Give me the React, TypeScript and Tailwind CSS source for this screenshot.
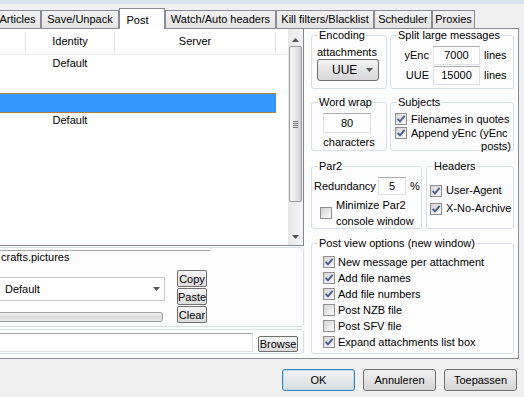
import React from 'react';

function Check({ on }: { on?: boolean }) {
  return (
    <span className="w-[12px] h-[12px] shrink-0 border border-[#8f8f8f] bg-linear-to-br from-[#d4d4d4] to-[#fbfbfb] flex items-center justify-center">
      {on && (
        <svg width="10" height="10" viewBox="0 0 10 10">
          <path d="M1.6 4.8 L4 7.4 L8.6 1.8" fill="none" stroke="#4a5d8f" strokeWidth="1.9" />
        </svg>
      )}
    </span>
  );
}

function CheckRow({ on, label, className }: { on?: boolean; label: string; className: string }) {
  return (
    <div className={className}>
      <Check on={on} />
      <span className="whitespace-nowrap">{label}</span>
    </div>
  );
}

function Group({ title, className, children }: { title: string; className: string; children?: React.ReactNode }) {
  return (
    <fieldset className={className}>
      <legend className="ml-[6px] px-[1px] leading-[12px] whitespace-nowrap">{title}</legend>
      {children}
    </fieldset>
  );
}

function Tab({ label, className }: { label: string; className: string }) {
  return <div className={className}>{label}</div>;
}

function Arrow({ up }: { up?: boolean }) {
  return (
    <svg width="7" height="4" viewBox="0 0 7 4">
      <path d={up ? 'M0 4 L3.5 0 L7 4 Z' : 'M0 0 L7 0 L3.5 4 Z'} fill="#555" />
    </svg>
  );
}

const tab =
  'h-[18px] shrink-0 border border-b-0 border-[#898c95] bg-linear-to-b from-[#f3f3f3] to-[#e3e3e3] flex items-center justify-center whitespace-nowrap';
const groupBox = 'border border-[#d5dfe5] rounded-[3px] min-w-0';
const edit = 'bg-white border border-[#dde1e7] border-t-[#abadb3] flex items-center justify-center';
const smallBtn =
  'border border-[#707070] rounded-[2px] bg-linear-to-b from-[#f4f4f4] to-[#dcdcdc] flex items-center justify-center leading-[12px]';
const dlgBtn =
  'w-[73px] h-[22px] border border-[#707070] rounded-[3px] bg-linear-to-b from-[#f2f2f2] to-[#d4d4d4] flex items-center justify-center';

export default function App() {
  return (
    <div className="w-[524px] h-[397px] overflow-hidden bg-[#f0f0f0] text-[11px] text-black font-['Liberation_Sans',Arial,sans-serif] flex flex-col">
      <div className="h-[4px] shrink-0 bg-[#d9e3ef]" />

      {/* tabs */}
      <div className="h-[24px] shrink-0 flex items-end ml-[-6px]">
        <Tab label="Articles" className={`${tab} w-[47px]`} />
        <Tab label="Save/Unpack" className={`${tab} w-[78px]`} />
        <div className="w-[46px] h-[21px] -mb-[1px] shrink-0 relative z-10 bg-[#fdfdfd] border border-b-0 border-[#898c95] flex justify-center pt-[3px] pr-[9px]">
          Post
        </div>
        <Tab label="Watch/Auto headers" className={`${tab} w-[111px]`} />
        <Tab label="Kill filters/Blacklist" className={`${tab} w-[98px]`} />
        <Tab label="Scheduler" className={`${tab} w-[58px]`} />
        <Tab label="Proxies" className={`${tab} w-[43px]`} />
      </div>

      {/* tab panel */}
      <div className="ml-[-10px] w-[529px] h-[331px] shrink-0 border border-[#898c95] bg-[#fdfdfd] flex">
        {/* left column */}
        <div className="w-[313px] shrink-0 flex flex-col">
          {/* list */}
          <div className="h-[217px] shrink-0 border-r border-b border-[#828790] bg-white flex">
            <div className="flex-1 flex flex-col">
              <div className="h-[26px] flex border-b border-[#eaeaea]">
                <div className="w-[35px] border-r border-[#e3e3e3] mt-[3px]" />
                <div className="w-[89px] border-r border-[#e3e3e3] mt-[3px] flex items-center justify-center pb-[3px]">Identity</div>
                <div className="w-[161px] border-r border-[#e3e3e3] mt-[3px] flex items-center justify-center pb-[3px]">Server</div>
              </div>
              <div className="h-[16px] flex items-center">
                <div className="w-[35px]" />
                <div className="w-[89px] text-center pr-[1px] leading-[13px]">Default</div>
              </div>
              <div className="h-[22px]" />
              <div className="h-[20px] w-[285px] bg-[#3399ff] border-y border-[#b07c42]" />
              <div className="h-[15px] flex items-center">
                <div className="w-[35px]" />
                <div className="w-[89px] text-center pr-[1px] leading-[13px]">Default</div>
              </div>
            </div>
            {/* scrollbar */}
            <div className="w-[15px] shrink-0 flex flex-col bg-linear-to-r from-[#e8e8e8] to-[#f5f5f5]">
              <div className="h-[17px] flex items-center justify-center pt-[5px]">
                <Arrow up />
              </div>
              <div className="h-[156px] mx-[1px] border border-[#9a9a9a] rounded-[2px] bg-linear-to-r from-[#f6f6f6] via-[#e8e8e8] to-[#cfcfcf] flex flex-col items-center justify-center gap-[1px]">
                <div className="w-[5px] h-[1px] bg-[#777]" />
                <div className="w-[5px] h-[1px] bg-[#777]" />
                <div className="w-[5px] h-[1px] bg-[#777]" />
                <div className="w-[5px] h-[1px] bg-[#777]" />
              </div>
              <div className="flex-1" />
              <div className="h-[17px] flex items-center justify-center">
                <Arrow />
              </div>
            </div>
          </div>

          {/* newsgroup / identity group */}
          <div className={`${groupBox} mt-[1px] h-[80px] shrink-0 flex flex-col`}>
            <div className="mt-[2px] w-[218px] h-[17px] border-t border-[#a5a5a5] pl-[9px] leading-[13px]">crafts.pictures</div>
            <div className="flex">
              <div className="w-[173px] shrink-0 flex flex-col">
                <div className="mt-[10px] h-[24px] bg-white border border-[#c6c9ce] flex items-center pl-[12px] pr-[4px]">
                  <span>Default</span>
                  <span className="ml-auto">
                    <Arrow />
                  </span>
                </div>
                <div className="mt-[11px] w-[171px] h-[10px] border border-[#9c9c9c] rounded-r-[3px] bg-linear-to-b from-[#f4f4f4] via-[#d9d9d9] to-[#ebebeb]" />
              </div>
              <div className="ml-[12px] mt-[3px] flex flex-col gap-[1px]">
                <div className={`${smallBtn} w-[30px] h-[17px]`}>Copy</div>
                <div className={`${smallBtn} w-[30px] h-[17px]`}>Paste</div>
                <div className={`${smallBtn} w-[30px] h-[17px]`}>Clear</div>
              </div>
            </div>
          </div>

          {/* file group */}
          <div className={`${groupBox} mt-[2px] h-[25px] shrink-0 flex items-start`}>
            <div className={`${edit} mt-[3px] w-[261px] h-[19px]`} />
            <div className={`${smallBtn} ml-[5px] mt-[6px] w-[40px] h-[16px]`}>Browse</div>
          </div>
        </div>

        {/* right column */}
        <div className="ml-[7px] w-[203px] shrink-0 flex flex-col">
          <div className="flex gap-[3px]">
            <Group title="Encoding" className={`${groupBox} w-[76px] h-[60px]`}>
              <div className="mt-[5px] pl-[5px] leading-[13px]">attachments</div>
              <div className="ml-[5px] w-[62px] h-[22px] border border-[#707070] rounded-[3px] bg-linear-to-b from-[#f2f2f2] to-[#d6d6d6] flex items-center pl-[14px] pr-[5px]">
                <span className="text-[12px]">UUE</span>
                <span className="ml-auto">
                  <Arrow />
                </span>
              </div>
            </Group>
            <Group title="Split large messages" className={`${groupBox} w-[124px] h-[60px]`}>
              <div className="mt-[5px] h-[19px] flex items-center">
                <span className="w-[38px] text-right">yEnc</span>
                <div className={`${edit} ml-[4px] w-[47px] h-[19px]`}>7000</div>
                <span className="ml-[4px]">lines</span>
              </div>
              <div className="mt-[1px] h-[19px] flex items-center">
                <span className="w-[38px] text-right">UUE</span>
                <div className={`${edit} ml-[4px] w-[47px] h-[19px]`}>15000</div>
                <span className="ml-[4px]">lines</span>
              </div>
            </Group>
          </div>

          <div className="mt-[7px] flex gap-[3px]">
            <Group title="Word wrap" className={`${groupBox} w-[76px] h-[55px]`}>
              <div className={`${edit} mt-[5px] ml-[11px] w-[48px] h-[20px]`}>80</div>
              <div className="mt-[3px] text-center leading-[12px]">characters</div>
            </Group>
            <Group title="Subjects" className={`${groupBox} w-[124px] h-[55px]`}>
              <CheckRow on label="Filenames in quotes" className="mt-[4px] h-[14px] pl-[4px] flex items-center gap-[4px]" />
              <CheckRow on label="Append yEnc (yEnc" className="h-[14px] pl-[4px] flex items-center gap-[4px]" />
              <div className="text-right pr-[2px] leading-[12px]">posts)</div>
            </Group>
          </div>

          <div className="mt-[9px] flex gap-[4px]">
            <Group title="Par2" className={`${groupBox} w-[111px] h-[69px]`}>
              <div className="mt-[5px] h-[18px] flex items-center">
                <span className="w-[66px] pl-[2px]">Redundancy</span>
                <div className={`${edit} w-[28px] h-[18px]`}>5</div>
                <span className="ml-[4px]">%</span>
              </div>
              <div className="mt-[2px] pl-[8px] flex items-start gap-[4px]">
                <span className="mt-[10px]">
                  <Check />
                </span>
                <div className="leading-[16px]">
                  <div>Minimize Par2</div>
                  <div>console window</div>
                </div>
              </div>
            </Group>
            <Group title="Headers" className={`${groupBox} w-[88px] h-[69px]`}>
              <CheckRow on label="User-Agent" className="mt-[11px] h-[15px] pl-[3px] flex items-center gap-[4px]" />
              <CheckRow on label="X-No-Archive" className="mt-[3px] h-[15px] pl-[3px] flex items-center gap-[4px]" />
            </Group>
          </div>

          <Group title="Post view options (new window)" className={`${groupBox} mt-[8px] w-[203px] h-[117px]`}>
            <div className="mt-[5px] flex flex-col">
              <CheckRow on label="New message per attachment" className="h-[16px] pl-[11px] flex items-center gap-[3px]" />
              <CheckRow on label="Add file names" className="h-[16px] pl-[11px] flex items-center gap-[3px]" />
              <CheckRow on label="Add file numbers" className="h-[16px] pl-[11px] flex items-center gap-[3px]" />
              <CheckRow label="Post NZB file" className="h-[16px] pl-[11px] flex items-center gap-[3px]" />
              <CheckRow label="Post SFV file" className="h-[16px] pl-[11px] flex items-center gap-[3px]" />
              <CheckRow on label="Expand attachments list box" className="h-[16px] pl-[11px] flex items-center gap-[3px]" />
            </div>
          </Group>
        </div>
      </div>

      {/* dialog buttons */}
      <div className="mt-[10px] pr-[7px] flex justify-end gap-[8px]">
        <div className="w-[73px] h-[22px] border border-[#3c7fb1] rounded-[3px] bg-linear-to-b from-[#f2f2f2] to-[#d8dde2] shadow-[inset_0_0_0_1px_#b9def5] flex items-center justify-center">
          OK
        </div>
        <div className={dlgBtn}>Annuleren</div>
        <div className={dlgBtn}>Toepassen</div>
      </div>
    </div>
  );
}
